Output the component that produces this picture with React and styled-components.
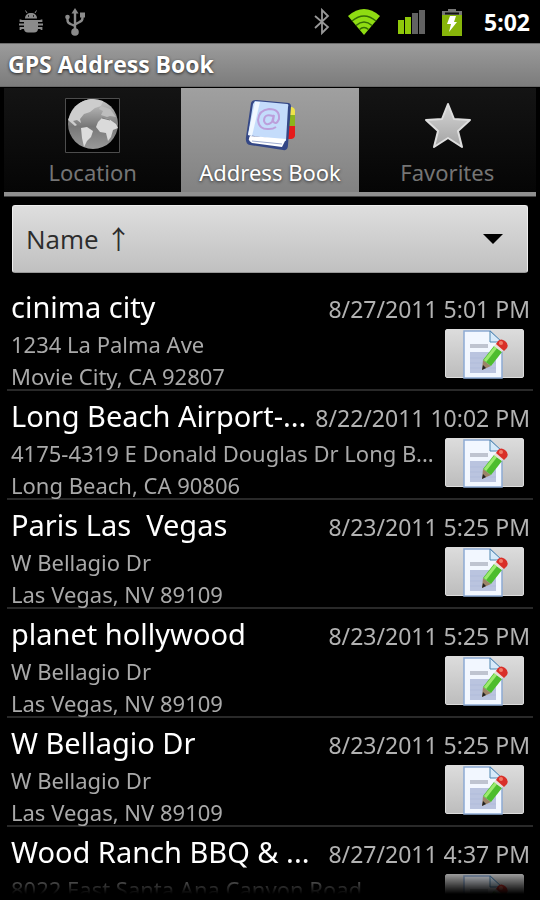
import React from "react";
import styled, { createGlobalStyle } from "styled-components";

const GlobalStyle = createGlobalStyle`
  *, *::before, *::after { box-sizing: border-box; }
  body {
    margin: 0;
    background: #000;
    font-family: "Noto Sans", "Open Sans", "DejaVu Sans", sans-serif;
  }
  button, select { font: inherit; }
`;

const Screen = styled.div`
  display: flex;
  flex-direction: column;
  height: 100vh;
  background: #000;
  color: #fff;
`;

const StatusBar = styled.header`
  display: flex;
  justify-content: space-between;
  align-items: center;
  flex: none;
  height: 43px;
  padding: 0 10px 0 18px;
`;

const StatusGroup = styled.div`
  display: flex;
  align-items: center;
  gap: ${(p) => p.$gap}px;
`;

const Clock = styled.time`
  margin-left: 5px;
  font-size: 23px;
  font-weight: 700;
  line-height: 32px;
`;

const TitleBar = styled.h1`
  flex: none;
  height: 44px;
  margin: 0;
  padding: 0 8px;
  border-top: 1px solid #6c6c6c;
  border-bottom: 1px solid #696969;
  background: linear-gradient(#9b9b9b, #7c7c7c);
  font-family: "Open Sans", "Noto Sans", sans-serif;
  font-size: 23px;
  font-weight: 700;
  line-height: 40px;
  text-shadow: 0 1px 3px #222;
`;

const Tabs = styled.nav`
  display: flex;
  flex: none;
  height: 109px;
  margin: 1px 4px 0;
  border-bottom: 1px solid #444;
`;

const Tab = styled.button`
  display: flex;
  flex: 1;
  flex-direction: column;
  align-items: center;
  gap: 3px;
  padding: 10px 0 0;
  border: 0;
  border-bottom: 4px solid #8f8f8f;
  background: ${(p) => (p.$active ? "linear-gradient(#a0a0a0, #828282)" : "linear-gradient(#141414, #050505)")};
  color: ${(p) => (p.$active ? "#fff" : "#757575")};
  font-size: 22px;
  line-height: 32px;
  text-shadow: ${(p) => (p.$active ? "0 1px 3px #333" : "none")};
`;

const SortField = styled.label`
  display: grid;
  flex: none;
  align-items: center;
  height: 68px;
  margin: 8px 12px 0;
  border: 1px solid #eee;
  border-bottom-color: #999;
  border-radius: 3px;
  background: linear-gradient(#dedede, #c0c0c0);
`;

const SortSelect = styled.select`
  grid-area: 1 / 1;
  width: 100%;
  height: 100%;
  padding: 0 60px 0 13px;
  border: 0;
  appearance: none;
  background: transparent;
  color: #2c2c2c;
  font-family: "Open Sans", "Noto Sans CJK JP", sans-serif;
  font-size: 26px;
`;

const Caret = styled.svg`
  grid-area: 1 / 1;
  justify-self: end;
  margin-right: 24px;
  pointer-events: none;
`;

const List = styled.ul`
  flex: 1;
  min-height: 0;
  margin: 9px 0 6px;
  padding: 0;
  overflow-y: auto;
  scrollbar-width: none;
  list-style: none;
  mask-image: linear-gradient(#000 calc(100% - 28px), transparent);
`;

const Entry = styled.li`
  display: grid;
  grid-template-columns: minmax(0, 1fr) auto;
  grid-template-rows: 46px 61px;
  margin: 0 7px;
  padding: 0 3px 0 4px;
  border-bottom: 2px solid #292929;
`;

const Heading = styled.div`
  display: flex;
  grid-column: 1 / -1;
  justify-content: space-between;
  align-items: baseline;
  gap: 5px;
  white-space: pre;
`;

const Name = styled.h2`
  min-width: 0;
  margin: 0;
  font-size: 29px;
  font-weight: 400;
  line-height: 49px;
`;

const Stamp = styled.time`
  flex: none;
  color: #b2b2b2;
  font-size: 23px;
  line-height: 32px;
`;

const Address = styled.address`
  color: #a9a9a9;
  font-size: 22px;
  font-style: normal;
  line-height: 32px;
  white-space: nowrap;
`;

const EditButton = styled.button`
  display: flex;
  justify-content: center;
  width: 79px;
  height: 49px;
  margin: 1px 6px 0 0;
  padding: 0;
  border: 1px solid #ddd;
  border-radius: 2px;
  background: linear-gradient(#dcdcdc, #bdbdbd);
`;

const BugIcon = () => (
  <svg width="26" height="26" viewBox="0 0 26 26" fill="#8b8b8b" stroke="#8b8b8b" aria-hidden="true">
    <path d="M7 9.500c0-3.500 2.500-5.500 6-5.500s6 2 6 5.500z" stroke="none" />
    <path d="M9 4 7.500 1.500M17 4l1.500-2.500" fill="none" />
    <path d="M6 11h14v8.500q0 4-4 4h-6q-4 0-4-4z" stroke="none" />
    <path d="M6 12H2.500v-1.500M6 15.500H1M6 19H2.500v2M20 12h3.500v-1.500M20 15.500h5M20 19h3.500v2" fill="none" strokeWidth="1.800" />
    <path d="M10 7h1M15 7h1" stroke="#111" strokeWidth="1.500" />
  </svg>
);

const UsbIcon = () => (
  <svg width="22" height="30" viewBox="0 0 22 30" fill="#8b8b8b" stroke="#8b8b8b" aria-hidden="true">
    <path d="M11 25V5M3.500 10v3q0 3 3 4l4.500 2M18.500 8v3q0 3-3 4L11 17.500" fill="none" strokeWidth="2.400" />
    <path d="m11 1 3.500 5.500h-7z" stroke="none" />
    <circle cx="3.500" cy="10" r="2.300" stroke="none" />
    <path d="M16 5.500h5v5h-5z" stroke="none" />
    <circle cx="11" cy="25" r="3.800" stroke="none" />
  </svg>
);

const BluetoothIcon = () => (
  <svg width="16" height="28" viewBox="0 0 16 28" fill="none" stroke="#999" strokeWidth="1.800" aria-hidden="true">
    <path d="m1 8 13 11-6 6V2l6 6L1 20" />
  </svg>
);

const WifiIcon = () => (
  <svg width="34" height="28" viewBox="0 0 34 28" aria-hidden="true">
    <path d="M1 8Q17-6 33 8L17 27z" fill="#8fdc12" />
    <path d="M5 13q12-10 24 0M9 17.500q8-7 16 0M12.500 21.500q4.500-4 9 0" fill="none" stroke="#356d06" strokeWidth="1.600" />
  </svg>
);

const SignalIcon = () => (
  <svg width="27" height="26" viewBox="0 0 27 26" aria-hidden="true">
    <path d="M0 11h6v14H0zM7 8h6v17H7z" fill="#8fc80a" />
    <path d="M14 4h6v21h-6zM21 1h6v24h-6z" fill="#626262" />
  </svg>
);

const BatteryIcon = () => (
  <svg width="20" height="28" viewBox="0 0 20 28" aria-hidden="true">
    <path d="M6 1h8v2h6v6H0V3h6z" fill="#777" />
    <path d="M3 4.500h14v2H3z" fill="#111" />
    <path d="M0 7h20v21H0z" fill="#87b50a" />
    <path d="M8 8h6l-2 6h3L7 24l2-8H5z" fill="#fff" />
  </svg>
);

const GlobeIcon = () => (
  <svg width="55" height="55" viewBox="0 0 55 55" aria-hidden="true">
    <defs>
      <linearGradient id="globe" x1="0" y1="0" x2="0" y2="1">
        <stop offset="0" stopColor="#c9c9c9" />
        <stop offset=".55" stopColor="#777" />
        <stop offset="1" stopColor="#999" />
      </linearGradient>
    </defs>
    <path d="M.5.500h54v54H.5z" fill="#030303" stroke="#4d4d4d" />
    <circle cx="28" cy="26" r="25" fill="url(#globe)" />
    <path d="M5 17Q11 3 26 1l12 2-2 5-6 2-5 4-6 2-4 5 1 4-4-3-4 1 4 4-2 1-7-6z" fill="#cdcdcd" />
    <path d="m16 30 6-1 6 4-2 6-4 4-3 6-2-9z" fill="#ddd" />
    <path d="m33 24 4-4 7 1 7 5 2 4-5 2-2 7-3 4-2-8-6-1-4-5z" fill="#dadada" />
    <path d="m36 8 9 3 6 8-6-1-3 1-6-2 2-4-4-2z" fill="#bdbdbd" />
    <path d="m37 20 8 2" fill="none" stroke="#777" />
  </svg>
);

const BookIcon = () => (
  <svg width="55" height="55" viewBox="0 0 55 55" aria-hidden="true">
    <g transform="translate(3 1)">
      <path d="M40 8h7q3 1 3 4v4H40z" fill="#efe34b" />
      <path d="M40 16h10v11H40z" fill="#8bb51d" />
      <path d="M40 27h10v10q-1 3-4 3h-6z" fill="#e61c1c" />
      <path d="M11 1 44 4q2 1 2 3l-3 39q0 6-5 5L5 46q-5-1-4-8L6 4q1-3 5-3z" fill="#344786" />
      <path d="m10 2 32 3q2 0 1 3l-2 34L3 36 8 5z" fill="#c4dcfb" />
      <path d="m10 3-7 33 4 1 8-34z" fill="#f1f8ff" />
      <path d="M5 37 41 40l-4 8-30-4q-5-2-2-7z" fill="#fff" />
      <path d="m7 42 30 3" stroke="#9eacd1" fill="none" />
      <path d="M28 17q-9-3-9 5 2 6 8 1l2-7-1 6q3 5 6-2 1-10-10-10-10 1-11 11 1 10 11 9 4 0 7-2" fill="none" stroke="#bc9fdb" strokeWidth="2" />
    </g>
  </svg>
);

const StarIcon = () => (
  <svg width="55" height="55" viewBox="0 0 55 55" aria-hidden="true">
    <defs>
      <linearGradient id="star" x1="0" y1="0" x2="0" y2="1">
        <stop offset="0" stopColor="#d6d6d6" />
        <stop offset="1" stopColor="#a3a3a3" />
      </linearGradient>
    </defs>
    <path d="m28 6 6 15 16 1-12 11 4 16-14-9-14 9 4-16L6 22l16-1z" fill="url(#star)" stroke="#dedede" strokeWidth="2" strokeLinejoin="round" />
  </svg>
);

const EditIcon = () => (
  <svg width="47" height="49" viewBox="0 0 47 49" aria-hidden="true">
    <path d="M3 1h26l12 12v35H3z" fill="#f2f7ff" stroke="#8daad3" strokeWidth="1.500" />
    <path d="M29 1v11h12z" fill="#d7eafa" stroke="#5086af" />
    <path d="M9 14h18v4H9z" fill="#bfc4d0" />
    <path d="M9 22h26v21H9z" fill="#bac4df" />
    <path d="M9 28h26M9 33h26M9 38h26" stroke="#b1bcda" />
    <path d="m22 30 8 6-9 4z" fill="#9c8468" />
    <path d="m22 35 3 3-4 2z" fill="#222" />
    <path d="m22 30 11-14 8 6-11 14z" fill="#4dbd2d" />
    <path d="m24 31 11-14" stroke="#9bea6e" strokeWidth="3" />
    <path d="m33 16 3-4 8 6-3 4z" fill="#e6dfd9" />
    <path d="m35 14 2-3q3-3 7 0t2 7l-3 3z" fill="#d92f28" />
    <circle cx="40" cy="13" r="2" fill="#f17b68" />
  </svg>
);

const tabs = [
  { label: "Location", Icon: GlobeIcon },
  { label: "Address Book", Icon: BookIcon },
  { label: "Favorites", Icon: StarIcon },
];

const entries = [
  { name: "cinima city", stamp: "8/27/2011 5:01 PM", lines: ["1234 La Palma Ave", "Movie City, CA 92807"] },
  { name: "Long Beach Airport-...", stamp: "8/22/2011 10:02 PM", lines: ["4175-4319 E Donald Douglas Dr Long B...", "Long Beach, CA 90806"] },
  { name: "Paris Las  Vegas", stamp: "8/23/2011 5:25 PM", lines: ["W Bellagio Dr", "Las Vegas, NV 89109"] },
  { name: "planet hollywood", stamp: "8/23/2011 5:25 PM", lines: ["W Bellagio Dr", "Las Vegas, NV 89109"] },
  { name: "W Bellagio Dr", stamp: "8/23/2011 5:25 PM", lines: ["W Bellagio Dr", "Las Vegas, NV 89109"] },
  { name: "Wood Ranch BBQ & ...", stamp: "8/27/2011 4:37 PM", lines: ["8022 East Santa Ana Canyon Road"] },
];

export default function App() {
  const [active, setActive] = React.useState("Address Book");
  return (
    <Screen>
      <GlobalStyle />
      <StatusBar>
        <StatusGroup $gap={20}>
          <BugIcon />
          <UsbIcon />
        </StatusGroup>
        <StatusGroup $gap={17}>
          <BluetoothIcon />
          <WifiIcon />
          <SignalIcon />
          <BatteryIcon />
          <Clock>5:02</Clock>
        </StatusGroup>
      </StatusBar>
      <TitleBar>GPS Address Book</TitleBar>
      <Tabs>
        {tabs.map(({ label, Icon }) => (
          <Tab key={label} type="button" $active={label === active} onClick={() => setActive(label)}>
            <Icon />
            {label}
          </Tab>
        ))}
      </Tabs>
      <SortField>
        <SortSelect aria-label="Sort order">
          <option>Name ↑</option>
        </SortSelect>
        <Caret width="20" height="10" viewBox="0 0 20 10" aria-hidden="true">
          <path d="M0 0h20L10 10z" fill="#000" />
        </Caret>
      </SortField>
      <List>
        {entries.map(({ name, stamp, lines }) => (
          <Entry key={name}>
            <Heading>
              <Name>{name}</Name>
              <Stamp>{stamp}</Stamp>
            </Heading>
            <Address>
              {lines.map((line) => (
                <div key={line}>{line}</div>
              ))}
            </Address>
            <EditButton type="button" aria-label={`Edit ${name}`}>
              <EditIcon />
            </EditButton>
          </Entry>
        ))}
      </List>
    </Screen>
  );
}
